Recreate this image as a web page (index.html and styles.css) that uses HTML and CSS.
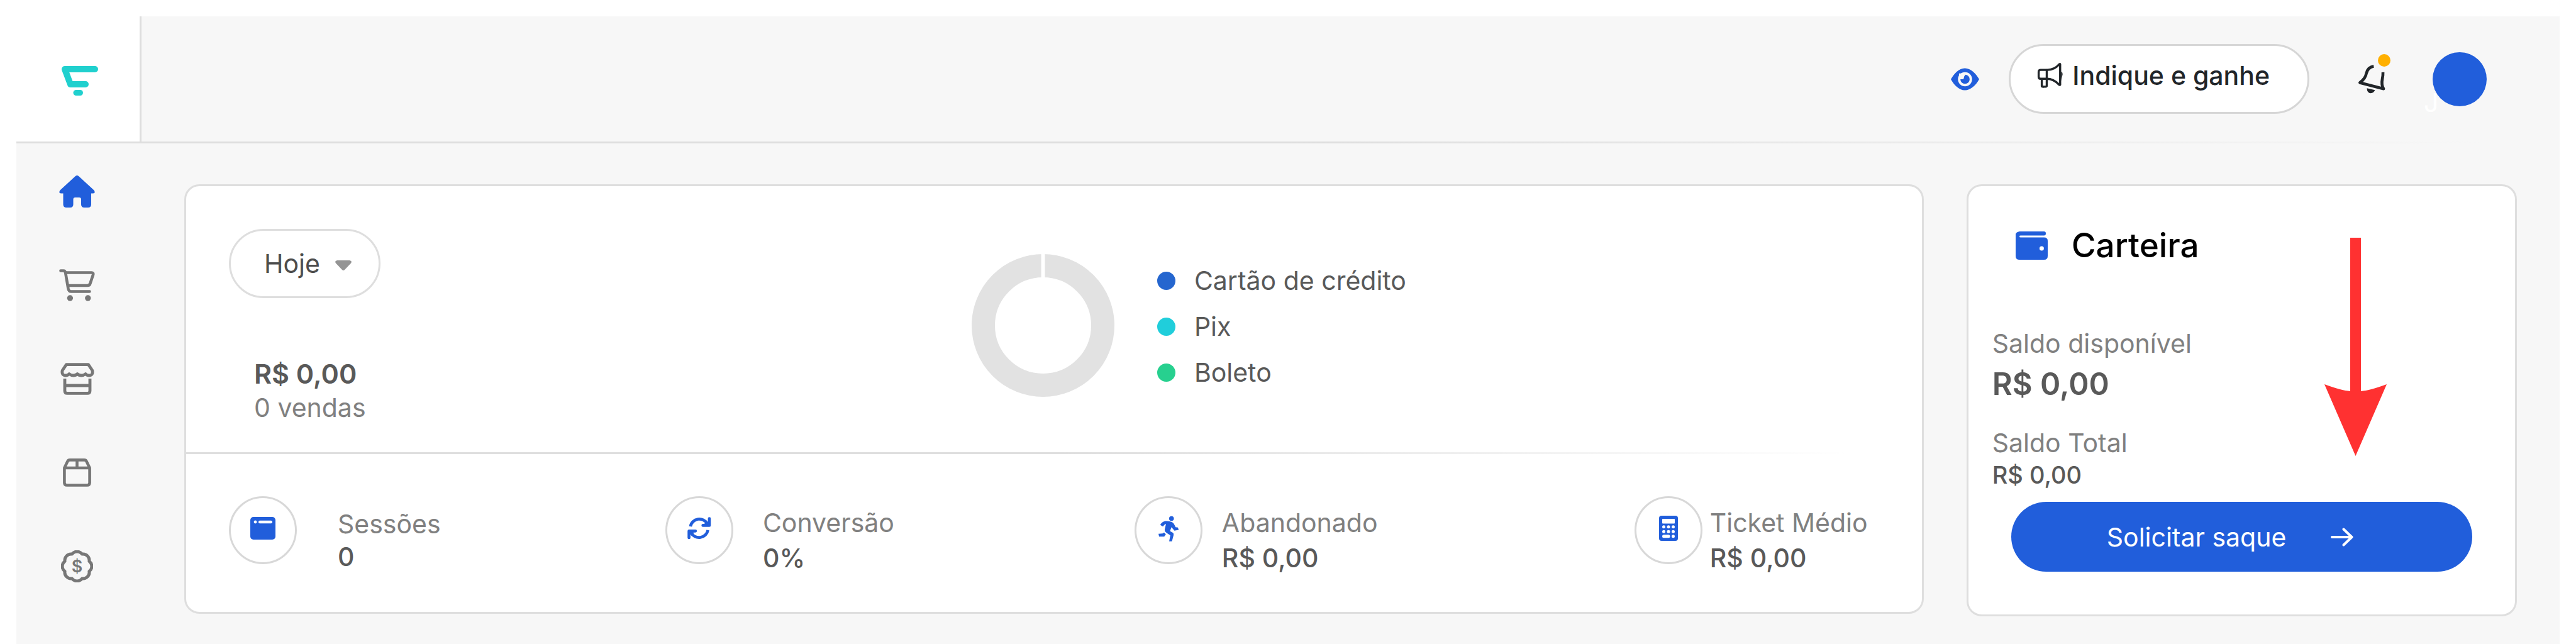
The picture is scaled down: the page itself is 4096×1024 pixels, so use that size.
FILE: index.html
```html
<!DOCTYPE html>
<html lang="pt-BR">
<head>
    <meta charset="UTF-8">
    <meta name="viewport" content="width=device-width, initial-scale=1.0">
    <title>Dashboard</title>
    <link rel="stylesheet" href="styles.css">
</head>
<body>
    <div class="app">
        <header class="header">
            <a href="#" class="logo" aria-label="Início">
                <svg width="59" height="47" viewBox="0 0 59 47" fill="none" stroke="#20d0ce" stroke-width="10" stroke-linecap="round" stroke-linejoin="round">
                    <path d="M54 5H6L15 29H39"/>
                    <path d="M24 42.500H30.500" stroke-width="9"/>
                </svg>
            </a>
            <div class="header-actions">
                <button class="icon-button" aria-label="Mostrar valores">
                    <svg width="45" height="36" viewBox="46 142 174 138">
                        <path d="M46 211C64 178 96 143 132 143S202 178 220 211C202 245 168 279 132 279S64 245 46 211Z" fill="#215edb"/>
                        <circle cx="133" cy="211" r="36" fill="#215edb" stroke="#f7f7f7" stroke-width="15"/>
                        <path d="M96 211V175H130L134 184Q126 195 126 203Q126 211 118 211Z" fill="#f7f7f7"/>
                    </svg>
                </button>
                <button class="refer-button">
                    <svg width="42" height="41" viewBox="568 122 160 156" fill="none" stroke="#212529" stroke-width="13" stroke-linejoin="round">
                        <path d="M627 168H590Q578 168 578 180V210Q578 222 590 222H627Z"/>
                        <path d="M627 168Q672 170 703 134Q708 130 708 134V258Q706 262 701 257Q668 222 627 222"/>
                        <path d="M597 222V268Q604 271 612 270H620Q627 270 627 262V222"/>
                        <path d="M714 178Q724 184 723 194L714 236Z" fill="#212529" stroke="none"/>
                    </svg>
                    Indique e ganhe
                </button>
                <button class="icon-button bell" aria-label="Notificações">
                    <svg width="45" height="47" viewBox="76 128 172 182" fill="none" stroke="#212529" stroke-width="18" stroke-linejoin="round">
                        <path d="M173 141C152 144 134 158 128 184C124 208 110 226 88 242L234 280C222 262 222 240 226 220Q231 196 230 178"/>
                        <path d="M131 276L181 288Q172 307 155 307Q132 306 131 276Z" fill="#212529" stroke="none"/>
                    </svg>
                    <span class="bell-badge"></span>
                </button>
                <button class="avatar" aria-label="Perfil"><span class="avatar-letter">J</span></button>
            </div>
        </header>

        <div class="body">
            <nav class="sidebar">
                <a href="#" class="active" aria-label="Início">
                    <svg width="57" height="51" viewBox="0 0 57 51" fill="currentColor">
                        <path d="M26 1Q28.500-.8 31 1L55.500 23.500Q58.500 28.500 54 28.500H51V46Q51 51 46 51H40Q35 51 35 46V38Q35 35 32 35H25.500Q22.500 35 22.500 38V46Q22.500 51 17.500 51H11.500Q6.500 51 6.500 46V28.500H3Q-1.500 28.500 1.500 23.500Z"/>
                    </svg>
                </a>
                <a href="#" aria-label="Vendas">
                    <svg width="57" height="51" viewBox="0 0 57 51" fill="none" stroke="currentColor" stroke-width="4.600" stroke-linecap="round" stroke-linejoin="round">
                        <path d="M2.500 2.500H7Q9.500 2.500 10.200 6L14.500 31Q15.500 35.500 19 35.500H48.500"/>
                        <path d="M11 5.500H51.500Q55 5.500 54 9L49.500 22.500Q48.500 26 45 26H14.500"/>
                        <circle cx="17.400" cy="46" r="4.700" fill="currentColor" stroke="none"/>
                        <circle cx="45.800" cy="46" r="4.700" fill="currentColor" stroke="none"/>
                    </svg>
                </a>
                <a href="#" aria-label="Loja">
                    <svg width="54" height="51" viewBox="0 0 54 51" fill="none" stroke="currentColor" stroke-width="4.800" stroke-linejoin="round">
                        <path d="M9.500 2.600H44.500L50.800 12Q52.500 20 45.500 20Q42 20 40 17.500Q37 20 33.500 20Q29.500 20 27 17.500Q24.500 20 20.500 20Q17 20 14 17.500Q12 20 8.500 20Q1.500 20 3.200 12Z"/>
                        <path d="M7 25V44.500Q7 48.400 11 48.400H43Q47 48.400 47 44.500V25M7 36H47"/>
                    </svg>
                </a>
                <a href="#" aria-label="Produtos">
                    <svg width="45" height="45" viewBox="0 0 45 45" fill="none" stroke="currentColor" stroke-width="4.600" stroke-linejoin="round">
                        <path d="M2.400 15L7.500 4.500Q8.500 2.400 11 2.400H34Q36.500 2.400 37.500 4.500L42.600 15V38.500Q42.600 42.500 38.500 42.500H6.500Q2.400 42.500 2.400 38.500ZM2.400 15H42.600M22.500 2.400V15"/>
                    </svg>
                </a>
                <a href="#" aria-label="Financeiro">
                    <svg width="51" height="51" viewBox="0 0 51 51" fill="none" stroke="currentColor" stroke-width="5" stroke-linejoin="round">
                        <path d="M44.900 33.500A10 10 0 0 1 33.500 44.900A10 10 0 0 1 17.500 44.900A10 10 0 0 1 6.100 33.500A10 10 0 0 1 6.100 17.500A10 10 0 0 1 17.500 6.100A10 10 0 0 1 33.500 6.100A10 10 0 0 1 44.900 17.500A10 10 0 0 1 44.900 33.500Z"/>
                        <text x="25.500" y="35" text-anchor="middle" class="badge-sign">$</text>
                    </svg>
                </a>
            </nav>

            <main class="content">
                <section class="card overview">
                    <div class="summary">
                        <div class="sales">
                            <div class="period">
                                <select class="period-select" aria-label="Período">
                                    <option>Hoje</option>
                                </select>
                                <svg class="period-arrow" width="26" height="16" viewBox="0 0 26 16">
                                    <path d="M3 0H23Q27.500 1 25 4.500L15 15Q13 17 11 15L1 4.500Q-1.500 1 3 0Z" fill="#949494"/>
                                </svg>
                            </div>
                            <div class="sales-total">R$ 0,00</div>
                            <div class="sales-count">0 vendas</div>
                        </div>
                        <div class="payments">
                            <svg width="227" height="227" viewBox="0 0 227 227">
                                <circle cx="113.500" cy="113.500" r="95" fill="none" stroke="#e2e2e2" stroke-width="37"/>
                                <path d="M113.500 0V40" stroke="#fff" stroke-width="6"/>
                            </svg>
                            <ul class="legend">
                                <li><span class="dot card-dot"></span>Cartão de crédito</li>
                                <li><span class="dot pix-dot"></span>Pix</li>
                                <li><span class="dot boleto-dot"></span>Boleto</li>
                            </ul>
                        </div>
                    </div>
                    <div class="divider"></div>
                    <div class="stats">
                        <div class="stat sessions">
                            <span class="stat-icon">
                                <svg width="40" height="36" viewBox="0 0 40 36">
                                    <rect width="40" height="36" rx="5" fill="#215edb"/>
                                    <circle cx="8" cy="8" r="2.400" fill="#fff"/>
                                    <rect x="13" y="5.800" width="22" height="4.400" rx="2" fill="#fff"/>
                                </svg>
                            </span>
                            <div class="stat-text">
                                <div class="stat-label">Sessões</div>
                                <div class="stat-value">0</div>
                            </div>
                        </div>
                        <div class="stat conversion">
                            <span class="stat-icon">
                                <svg width="38" height="36" viewBox="118 104 148 140" fill="none" stroke="#215edb" stroke-width="18">
                                    <path d="M137 163A56 54 0 0 1 242 146"/>
                                    <path d="M245 185A56 54 0 0 1 140 202"/>
                                    <path d="M254 114V156H214" stroke-linecap="round" stroke-linejoin="round"/>
                                    <path d="M128 232V191H168" stroke-linecap="round" stroke-linejoin="round"/>
                                    <path d="M228 138L256 154M154 210L126 192"/>
                                </svg>
                            </span>
                            <div class="stat-text">
                                <div class="stat-label">Conversão</div>
                                <div class="stat-value">0%</div>
                            </div>
                        </div>
                        <div class="stat abandoned">
                            <span class="stat-icon">
                                <svg width="34" height="41" viewBox="116 94 130 156" fill="#215edb">
                                    <circle cx="199" cy="111" r="14.500"/>
                                    <path d="M131 150C137 135 152 125 171 126C195 127 210 133 217 149L224 163L238 165L243 180L217 184L199 163L190 187L207 197Q214 202 212 211L202 249H185L192 213L169 198Q156 190 158 177L166 143Q155 146 147 160Z"/>
                                    <path d="M120 204L145 202L154 196L165 206L155 221H124Z"/>
                                </svg>
                            </span>
                            <div class="stat-text">
                                <div class="stat-label">Abandonado</div>
                                <div class="stat-value">R$ 0,00</div>
                            </div>
                        </div>
                        <div class="stat ticket">
                            <span class="stat-icon">
                                <svg width="30" height="40" viewBox="0 0 30 40">
                                    <rect width="30" height="40" rx="4" fill="#215edb"/>
                                    <g fill="#fff">
                                        <rect x="5" y="5" width="20" height="7.500" rx="1"/>
                                        <circle cx="7.500" cy="17.800" r="2.500"/><circle cx="15" cy="17.800" r="2.500"/><circle cx="22.500" cy="17.800" r="2.500"/>
                                        <circle cx="7.500" cy="25.300" r="2.500"/><circle cx="15" cy="25.300" r="2.500"/><circle cx="22.500" cy="25.300" r="2.500"/>
                                        <rect x="5" y="30.300" width="12.500" height="5" rx="2.500"/>
                                        <circle cx="22.500" cy="32.800" r="2.500"/>
                                    </g>
                                </svg>
                            </span>
                            <div class="stat-text">
                                <div class="stat-label">Ticket Médio</div>
                                <div class="stat-value">R$ 0,00</div>
                            </div>
                        </div>
                    </div>
                </section>

                <section class="card wallet">
                    <h2 class="wallet-title">
                        <svg width="51" height="45" viewBox="0 0 51 45">
                            <path d="M6 0H45Q48 0 48 3.300Q48 6.600 45 6.600H8Q6 6.600 6 8Q6 9.500 8 9.500H45Q51 9.500 51 15V39Q51 45 45 45H6Q0 45 0 39V4Q1 1 6 0Z" fill="#215edb"/>
                            <circle cx="41.400" cy="27" r="3.500" fill="#fff"/>
                        </svg>
                        Carteira
                    </h2>
                    <div class="balance-label">Saldo disponível</div>
                    <div class="balance-available">R$ 0,00</div>
                    <div class="balance-label">Saldo Total</div>
                    <div class="balance-total">R$ 0,00</div>
                    <button class="withdraw-button">
                        Solicitar saque
                        <svg width="36" height="30" viewBox="0 0 36 30" fill="none" stroke="#fff" stroke-width="4" stroke-linecap="round" stroke-linejoin="round">
                            <path d="M2 15H33M20.500 2.500L33.500 15L20.500 27.500"/>
                        </svg>
                    </button>
                    <svg class="pointer" width="99" height="347" viewBox="0 0 99 347" fill="#ff3131">
                        <path d="M41 0H58V244Q72 243 99 233L49.500 347L0 233Q27 243 41 244Z"/>
                    </svg>
                </section>
            </main>
        </div>
    </div>
</body>
</html>
```

FILE: styles.css
```css
* {
    box-sizing: border-box;
}
body {
    margin: 0;
    padding: 26px 26px 0;
    background: #ffffff;
    font-family: Inter, "Open Sans", sans-serif;
    font-size: 41px;
    color: #595959;
}
svg {
    display: block;
    flex-shrink: 0;
}
button {
    font: inherit;
    border: none;
    padding: 0;
    background: none;
    cursor: pointer;
}
.app {
    min-height: calc(100vh - 26px);
    background: #f7f7f7;
}

/* Header */
.header {
    display: flex;
    justify-content: space-between;
    position: relative;
    padding-bottom: 3px;
}
.header::after {
    content: "";
    position: absolute;
    left: 0;
    right: 0;
    bottom: 0;
    height: 3px;
    background: linear-gradient(to right, #dedede 50%, transparent 97%);
}
.logo {
    display: flex;
    align-items: center;
    justify-content: center;
    width: 199px;
    height: 199px;
    padding: 6px 0 0 4px;
    background: #ffffff;
    border-right: 3px solid #dedede;
}
.header-actions {
    display: flex;
    align-items: center;
    padding-right: 116px;
}
.icon-button {
    position: relative;
}
.refer-button {
    display: flex;
    align-items: center;
    gap: 14px;
    height: 111px;
    margin: 0 77px 0 47px;
    padding: 0 60px 12px 42px;
    border: 3px solid #d6d6d6;
    border-radius: 56px;
    background: #ffffff;
    color: #212529;
    font-weight: 500;
}
.bell {
    margin-right: 74px;
}
.bell-badge {
    position: absolute;
    top: -16px;
    right: -7px;
    width: 20px;
    height: 20px;
    border-radius: 50%;
    background: #ffb000;
}
.avatar {
    position: relative;
    width: 86px;
    height: 86px;
    border-radius: 50%;
    background: #215edb;
}
.avatar-letter {
    position: absolute;
    left: -14px;
    bottom: -18px;
    line-height: 48px;
    color: #ffffff;
}

/* Sidebar */
.body {
    display: flex;
}
.sidebar {
    display: flex;
    flex-direction: column;
    gap: 89px;
    width: 199px;
    padding: 46px 6px 0 0;
}
.sidebar a {
    display: flex;
    align-items: center;
    justify-content: center;
    height: 60px;
    color: #777777;
}
.sidebar a.active {
    color: #215edb;
}
.badge-sign {
    font-size: 27px;
    font-weight: 600;
    fill: currentColor;
    stroke: none;
}

/* Cards */
.content {
    flex: 1;
    display: grid;
    grid-template-columns: 3.16fr 1fr;
    align-items: start;
    gap: 68px;
    padding: 65px 68px 44px;
}
.card {
    background: #ffffff;
    border: 3px solid #dedede;
    border-radius: 24px;
}
.summary {
    display: grid;
    grid-template-columns: 1181fr 1511fr;
    padding: 68px 0 45px 68px;
}
.period {
    position: relative;
    width: 241px;
    margin-bottom: 92px;
}
.period-select {
    display: block;
    appearance: none;
    width: 100%;
    height: 110px;
    padding: 0 0 0 53px;
    border: 3px solid #dedede;
    border-radius: 55px;
    background: #ffffff;
    font: inherit;
    color: #4d4d4d;
}
.period-arrow {
    position: absolute;
    top: 50px;
    right: 46px;
    pointer-events: none;
}
.sales-total {
    padding-left: 40px;
    font-size: 43px;
    font-weight: 600;
    line-height: 56px;
}
.sales-count {
    padding-left: 40px;
    line-height: 52px;
    color: #808080;
}
.payments {
    display: flex;
    align-items: flex-start;
    gap: 68px;
    padding-top: 40px;
}
.legend {
    margin: 0;
    padding: 6px 0 0;
    list-style: none;
}
.legend li {
    display: flex;
    align-items: center;
    gap: 30px;
    line-height: 73px;
}
.dot {
    width: 29px;
    height: 29px;
    border-radius: 50%;
}
.card-dot { background: #2566cf; }
.pix-dot { background: #20cedb; }
.boleto-dot { background: #27d08f; }
.divider {
    height: 3px;
    background: linear-gradient(to right, #dedede 50%, transparent 96%);
}

/* Stats */
.stats {
    display: grid;
    grid-template-columns: 694fr 746fr 795fr 457fr;
    padding: 67px 0 58px 68px;
}
.stat {
    display: flex;
    align-items: flex-start;
}
.sessions { gap: 65px; }
.conversion { gap: 47px; }
.abandoned { gap: 31px; }
.ticket { gap: 12px; }
.stat-icon {
    display: flex;
    align-items: center;
    justify-content: center;
    width: 108px;
    height: 108px;
    padding-bottom: 6px;
    border: 3px solid #d8d8d8;
    border-radius: 50%;
}
.stat-text {
    padding-top: 14px;
    line-height: 56px;
}
.sessions .stat-text {
    padding-top: 18px;
    line-height: 52px;
}
.stat-label {
    color: #808080;
}
.stat-value {
    font-weight: 500;
}

/* Wallet */
.wallet {
    position: relative;
    display: flex;
    flex-direction: column;
    padding: 64px 68px 68px 38px;
}
.wallet-title {
    display: flex;
    align-items: center;
    gap: 38px;
    margin: 0 0 100px;
    padding-left: 37px;
    font-size: 53px;
    font-weight: 500;
    line-height: 60px;
    color: #000000;
}
.balance-label {
    line-height: 52px;
    color: #808080;
}
.balance-available {
    margin-bottom: 28px;
    font-size: 49px;
    font-weight: 600;
    line-height: 78px;
}
.balance-total {
    margin-bottom: 18px;
    font-size: 38px;
    font-weight: 500;
    line-height: 50px;
}
.withdraw-button {
    display: flex;
    align-items: center;
    gap: 71px;
    height: 111px;
    margin-left: 30px;
    padding-left: 152px;
    border-radius: 56px;
    background: #215edb;
    color: #ffffff;
}
/* Red arrow over the card, pointing at the withdraw button */
.pointer {
    position: absolute;
    top: 82px;
    right: 204px;
}
```
